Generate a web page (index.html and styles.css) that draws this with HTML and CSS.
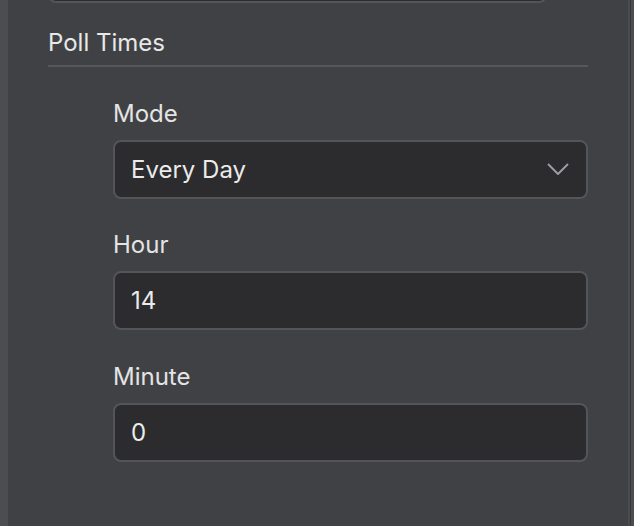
FILE: index.html
```html
<!DOCTYPE html>
<html lang="en">
<head>
<meta charset="utf-8">
<title>Poll Times</title>
<link rel="stylesheet" href="styles.css">
</head>
<body>
<div class="window">
  <div class="gutter"></div>
  <main class="panel">
    <div class="prev-field"></div>
    <h2 class="section-title">Poll Times</h2>
    <div class="fields">
      <div class="field">
        <label class="label">Mode</label>
        <div class="control select">
          <span class="value">Every Day</span>
          <svg class="chevron" width="22" height="13" viewBox="0 0 22 13" aria-hidden="true">
            <path d="M1.5 1.5 L11 11 L20.5 1.5" fill="none" stroke="#9c9fa8" stroke-width="1.8" stroke-linecap="round" stroke-linejoin="round"/>
          </svg>
        </div>
      </div>
      <div class="field">
        <label class="label">Hour</label>
        <div class="control"><span class="value">14</span></div>
      </div>
      <div class="field">
        <label class="label">Minute</label>
        <div class="control"><span class="value">0</span></div>
      </div>
    </div>
  </main>
  <div class="scroll">
    <div class="scroll-edge"></div>
    <div class="scroll-gap"></div>
    <div class="scroll-track"></div>
  </div>
</div>
</body>
</html>
```
FILE: styles.css
```css
* { box-sizing: border-box; }
html, body {
  margin: 0;
  padding: 0;
  height: 100%;
  background: #404144;
  font-family: Inter, "Noto Sans", "Liberation Sans", sans-serif;
  color: #e8e8e8;
  overflow: hidden;
}
.window {
  display: flex;
  height: 526px;
  width: 634px;
}
.gutter {
  width: 8px;
  background: #4c4d51;
  flex: none;
}
.panel {
  flex: 1;
  background: #404144;
  padding: 0 40px;
  overflow: hidden;
}
.prev-field {
  width: 499px;
  height: 58px;
  margin-top: -55px;
  background: #2c2c2e;
  border: 2px solid #545559;
  border-radius: 8px;
}
.section-title {
  margin: 24px 0 0;
  padding-bottom: 6px;
  font-size: 24px;
  font-weight: 400;
  line-height: 32px;
  border-bottom: 2px solid #56575a;
  color: #e8e8e8;
}
.fields {
  padding-left: 65px;
  padding-top: 30px;
  display: flex;
  flex-direction: column;
  gap: 30px;
}
.field {
  display: flex;
  flex-direction: column;
}
.label {
  font-size: 24px;
  line-height: 29px;
  padding-top: 1.5px;
  margin-bottom: 12px;
  color: #e4e4e4;
}
.control {
  height: 59px;
  background: #2c2c2e;
  border: 2px solid #545559;
  border-radius: 8px;
  padding: 0 16px;
  display: flex;
  align-items: center;
  justify-content: space-between;
  font-size: 24px;
  line-height: 29px;
  color: #ebebeb;
}
.select { padding-right: 17px; }
.chevron { display: block; }
.scroll {
  flex: none;
  width: 6px;
  display: flex;
}
.scroll-edge { width: 2px; background: #4b4c50; }
.scroll-gap { width: 1px; background: #37383b; }
.scroll-track { flex: 1; background: #4c4d51; }
```
